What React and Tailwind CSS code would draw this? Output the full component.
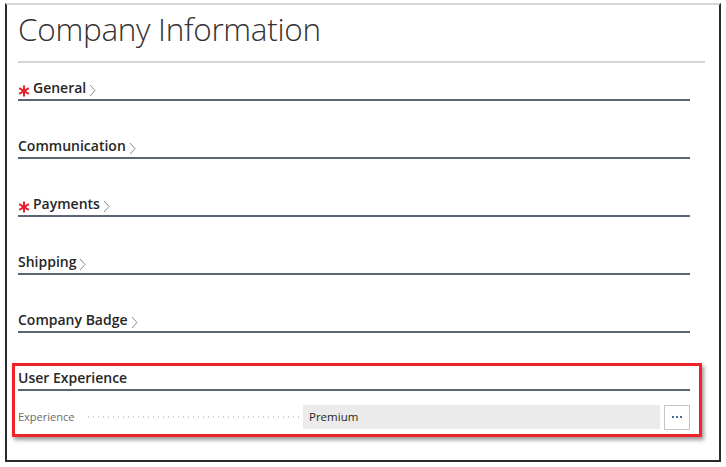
import React from "react";

const font = { fontFamily: '"Open Sans", "Noto Sans", sans-serif' };

const Asterisk = () => (
  <svg width="12" height="12" viewBox="0 0 12 12" className="mr-[3px] mb-[1px]">
    <g stroke="#e8202a" strokeWidth="2" strokeLinecap="butt">
      <line x1="6" y1="0.5" x2="6" y2="11.5" />
      <line x1="1.2" y1="3.2" x2="10.8" y2="8.8" />
      <line x1="1.2" y1="8.8" x2="10.8" y2="3.2" />
    </g>
  </svg>
);

const Chevron = () => (
  <svg width="7" height="13" viewBox="0 0 7 13" className="ml-[3px] mb-[1px]">
    <polyline points="1,1 6,6.5 1,12" fill="none" stroke="#8a8a8a" strokeWidth="1" />
  </svg>
);

const sections = [
  { title: "General", required: true, h: "h-[38px]" },
  { title: "Communication", required: false, h: "h-[58px]" },
  { title: "Payments", required: true, h: "h-[58px]" },
  { title: "Shipping", required: false, h: "h-[58px]" },
  { title: "Company Badge", required: false, h: "h-[58px]" },
];

export default function App() {
  return (
    <div className="w-[726px] h-[467px] bg-white pt-[3px] pl-[5px]" style={font}>
      <div className="w-[716px] h-[459px] border-2 border-[#2b2b2b] border-t-[#d6d6d6] pl-[11px]">
        {/* Title */}
        <h1 className="h-[56px] pt-[3px] text-[31.5px] leading-[42px] font-light text-[#333] tracking-[-0.3px]">
          Company Information
        </h1>
        <div className="w-[687px] h-[2px] bg-[#d4d4d4]" />

        {/* Sections */}
        {sections.map((s) => (
          <div
            key={s.title}
            className={`${s.h} w-[672px] flex items-end pb-[1px] border-b-2 border-[#5c6673]`}
          >
            {s.required && <Asterisk />}
            <span className="text-[14px] leading-[20px] font-semibold text-[#262626]">
              {s.title}
            </span>
            <Chevron />
          </div>
        ))}

        {/* User Experience (highlighted) */}
        <div className="mt-[30px] -ml-[6px] w-[690px] border-[3px] border-[#f0222b] pl-[3px] pr-[9px] pb-[5px] shadow-[2px_3px_4px_rgba(0,0,0,0.4)]">
          <div className="h-[25px] flex items-end pb-[1px] border-b-2 border-[#5c6673]">
            <span className="text-[14px] leading-[20px] font-semibold text-[#262626]">
              User Experience
            </span>
          </div>
          <div className="mt-[14px] h-[24px] flex items-center">
            <div className="w-[282px] flex items-center">
              <span className="text-[11px] text-[#6b6b6b] pr-[12px]">Experience</span>
              <div className="flex-1 h-[2px] bg-[radial-gradient(circle,#cfcfcf_0.8px,transparent_1px)] bg-[length:5px_2px] bg-repeat-x" />
            </div>
            <div className="ml-[3px] w-[357px] h-[24px] bg-[#ebebeb] flex items-center pl-[6px] text-[11.5px] text-[#262626]">
              Premium
            </div>
            <button className="ml-[4px] w-[26px] h-[25px] border border-[#c6c6c6] bg-white flex items-center justify-center gap-[2px]">
              <span className="w-[2px] h-[2px] bg-[#4a6d96]" />
              <span className="w-[2px] h-[2px] bg-[#4a6d96]" />
              <span className="w-[2px] h-[2px] bg-[#4a6d96]" />
            </button>
          </div>
        </div>
      </div>
    </div>
  );
}
